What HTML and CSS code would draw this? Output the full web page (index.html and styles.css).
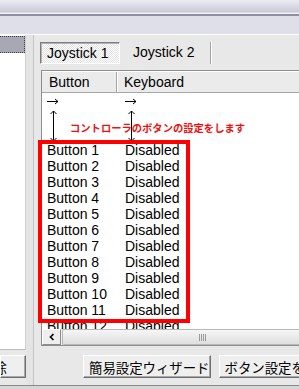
FILE: index.html
```html
<!DOCTYPE html>
<html>
<head>
<meta charset="utf-8">
<link rel="stylesheet" href="styles.css">
</head>
<body>
<div class="top"></div>
<div class="band"></div>
<div class="main">
  <div class="left">
    <div class="lb"><div class="lb-sel"></div></div>
    <div class="btn del">削除</div>
  </div>
  <div class="sep"></div>
  <div class="right">
    <div class="tabs">
      <div class="tab on">Joystick 1</div>
      <div class="tab off">Joystick 2</div>
    </div>
    <div class="list">
      <div class="hdr"><div class="hc h1">Button</div><div class="hc h2">Keyboard</div></div>
      <div class="rows">
        <div class="row"><div class="c1"><svg width="13" height="16" viewBox="0 0 13 16"><path d="M0 7.5H11M8 5L11 7.5L8 10" fill="none" stroke="#000" stroke-width="1"/></svg></div><div class="c2"><svg width="13" height="16" viewBox="0 0 13 16"><path d="M0 7.5H11M8 5L11 7.5L8 10" fill="none" stroke="#000" stroke-width="1"/></svg></div></div>
        <div class="row"><div class="c1 ar"><svg width="12" height="16" viewBox="0 0 12 16"><path d="M6.5 1V16M3.5 4L6.5 1L9.5 4" fill="none" stroke="#000" stroke-width="1"/></svg></div><div class="c2 ar"><svg width="12" height="16" viewBox="0 0 12 16"><path d="M6.5 1V16M3.5 4L6.5 1L9.5 4" fill="none" stroke="#000" stroke-width="1"/></svg></div></div>
        <div class="row"><div class="c1 ar"><svg width="12" height="16" viewBox="0 0 12 16"><path d="M6.5 0V15M3.5 12L6.5 15L9.5 12" fill="none" stroke="#000" stroke-width="1"/></svg></div><div class="c2 ar"><svg width="12" height="16" viewBox="0 0 12 16"><path d="M6.5 0V15M3.5 12L6.5 15L9.5 12" fill="none" stroke="#000" stroke-width="1"/></svg></div></div>
        <div class="row"><div class="c1">Button 1</div><div class="c2">Disabled</div></div>
        <div class="row"><div class="c1">Button 2</div><div class="c2">Disabled</div></div>
        <div class="row"><div class="c1">Button 3</div><div class="c2">Disabled</div></div>
        <div class="row"><div class="c1">Button 4</div><div class="c2">Disabled</div></div>
        <div class="row"><div class="c1">Button 5</div><div class="c2">Disabled</div></div>
        <div class="row"><div class="c1">Button 6</div><div class="c2">Disabled</div></div>
        <div class="row"><div class="c1">Button 7</div><div class="c2">Disabled</div></div>
        <div class="row"><div class="c1">Button 8</div><div class="c2">Disabled</div></div>
        <div class="row"><div class="c1">Button 9</div><div class="c2">Disabled</div></div>
        <div class="row"><div class="c1">Button 10</div><div class="c2">Disabled</div></div>
        <div class="row"><div class="c1">Button 11</div><div class="c2">Disabled</div></div>
        <div class="row"><div class="c1">Button 12</div><div class="c2">Disabled</div></div>
      </div>
      <div class="hscroll">
        <div class="sbtn"><svg width="8" height="8" viewBox="0 0 8 8"><path d="M5.5 1L2.5 4L5.5 7" fill="none" stroke="#000" stroke-width="1.6"/></svg></div>
        <div class="thumb"><span class="grip"></span></div>
      </div>
    </div>
    <div class="btnrow">
      <div class="btn b1">簡易設定ウィザード</div>
      <div class="btn b2">ボタン設定を保存</div>
    </div>
  </div>
</div>
<div class="foot"></div>
<div class="note">コントローラのボタンの設定をします</div>
<div class="redbox"></div>
</body>
</html>
```
FILE: styles.css
```css
* { box-sizing: border-box; }
html, body { margin: 0; padding: 0; }
body {
  width: 299px;
  height: 389px;
  overflow: hidden;
  position: relative;
  background: #e8e8e8;
  font-family: "Liberation Sans", "Noto Sans CJK JP", sans-serif;
  font-size: 14px;
  color: #000;
}
.top {
  height: 16px;
  background: linear-gradient(#ececf2 0, #c9cad7 12px, #f2f2f6 13px, #f2f2f6 14px, #8e8fa3 14px, #8e8fa3 16px);
}
.band {
  height: 19px;
  background: #dedfe8;
  border-bottom: 1px solid #ffffff;
}
.main {
  display: flex;
  height: 350px;
}
.left {
  width: 26px;
  display: flex;
  flex-direction: column;
  overflow: hidden;
}
.lb {
  height: 315px;
  background: #fff;
  border-right: 1px solid #cfcfcf;
  border-bottom: 1px solid #bdbdbd;
  padding-top: 1px;
}
.lb-sel {
  height: 17px;
  background: #a7a8b4;
  border: 1px dotted #3a3a44;
  border-left: none;
}
.sep {
  width: 8px;
  background: #e4e4e4;
  border-right: 1px solid #c4c4c4;
}
.right {
  flex: 1;
  overflow: hidden;
  padding-left: 6px;
}
.tabs {
  display: flex;
  margin-top: 7px;
  height: 22px;
}
.tab {
  height: 22px;
  line-height: 20px;
  font-size: 14px;
  white-space: nowrap;
}
.tab.on {
  width: 80px;
  padding-left: 6px;
  border: 1px solid;
  border-color: #7c7c7c #ffffff #ffffff #7c7c7c;
  box-shadow: inset 1px 1px 0 #b4b4b4;
  background: repeating-conic-gradient(#ffffff 0 25%, #e2e2e2 0 50%) 0 0 / 2px 2px;
}
.tab.off {
  width: 89px;
  margin-left: 2px;
  padding-left: 11px;
  border-right: 1px solid #a4a4a4;
  box-shadow: 1px 0 0 #fff;
}
.list {
  margin-top: 6px;
  margin-left: 1px;
  width: 290px;
  border: 1px solid #8e8e8e;
  border-right: none;
  background: #fff;
}
.hdr {
  display: flex;
  height: 22px;
  background: #ebebeb;
  border-top: 1px solid #fff;
  border-bottom: 1px solid #a6a6a6;
}
.hc {
  line-height: 20px;
  white-space: nowrap;
}
.h1 {
  width: 75px;
  padding-left: 7px;
  border-right: 1px solid #a6a6a6;
  box-shadow: 1px 0 0 #fff;
}
.h2 { padding-left: 7px; }
.rows {
  height: 236px;
  padding-top: 1px;
  overflow: hidden;
}
.row {
  display: flex;
  height: 16px;
  line-height: 16px;
  white-space: nowrap;
}
.row svg { display: block; }
.c1 {
  width: 75px;
  padding-left: 5px;
}
.c2 {
  padding-left: 8px;
}
.hscroll {
  display: flex;
  height: 16px;
  background: #f0f0f0;
}
.sbtn {
  width: 19px;
  height: 16px;
  display: flex;
  align-items: center;
  justify-content: center;
  background: #eeeeee;
  border: 1px solid;
  border-color: #ffffff #8c8c8c #8c8c8c #ffffff;
}
.thumb {
  flex: 1;
  margin-left: 1px;
  background: linear-gradient(#f6f6f6, #dedede);
  border: 1px solid #b8b8b8;
  border-right: none;
  border-radius: 2px 0 0 2px;
  padding-left: 136px;
  display: flex;
  align-items: center;
}
.grip {
  width: 7px;
  height: 7px;
  background: repeating-linear-gradient(90deg, #9a9a9a 0 1px, transparent 1px 2px);
}
.btnrow {
  display: flex;
  margin-top: 9px;
}
.btn {
  height: 23px;
  display: flex;
  align-items: center;
  font-family: "Noto Sans CJK JP", sans-serif;
  font-size: 13.4px;
  white-space: nowrap;
  background: #efefef;
  border: 1px solid;
  border-color: #ffffff #6e6e6e #6e6e6e #ffffff;
  box-shadow: inset -1px -1px 0 #a8a8a8;
}
.b1 {
  margin-left: 43px;
  width: 136px;
  padding-left: 5px;
}
.b2 {
  margin-left: 8px;
  width: 120px;
  padding-left: 5px;
}
.del {
  margin-top: 5px;
  width: 26px;
  justify-content: flex-end;
  padding-right: 18px;
  overflow: hidden;
}
.foot {
  height: 4px;
  border-top: 1px solid #8a8a8a;
  background: #d6d6d6;
}
.note {
  position: absolute;
  left: 70px;
  top: 121px;
  font-family: "Noto Sans CJK JP", sans-serif;
  font-weight: bold;
  font-size: 10.3px;
  line-height: 14px;
  color: #ee1111;
  white-space: nowrap;
}
.redbox {
  position: absolute;
  left: 38px;
  top: 140px;
  width: 152px;
  height: 183px;
  border: 4px solid #ff0000;
}
```
